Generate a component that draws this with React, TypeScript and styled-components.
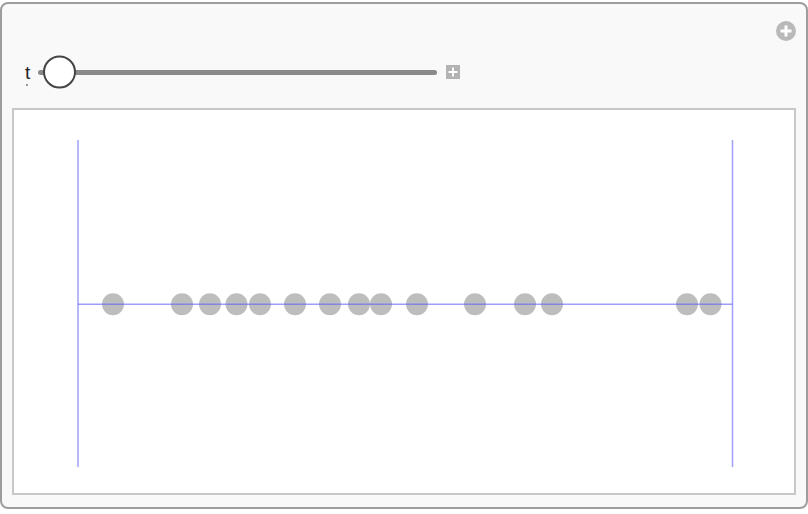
import React from "react";
import styled, { createGlobalStyle } from "styled-components";

const GlobalStyle = createGlobalStyle`
  html, body {
    margin: 0;
    padding: 0;
    background: #ffffff;
    font-family: "Liberation Sans", Arial, sans-serif;
  }
  * {
    box-sizing: border-box;
  }
`;

const dots = [113, 182, 210, 236.5, 260, 295, 330, 359, 381, 417, 475, 525, 552, 687, 710.5];

const App = () => {
  return (
    <Page>
      <GlobalStyle />
      <Panel>
        <TopBar>
          <CircleButton>
            <svg width="20" height="20" viewBox="0 0 20 20">
              <circle cx="10" cy="10" r="10" fill="#b9b9b9" />
              <rect x="8.5" y="4.5" width="3" height="11" fill="#fff" />
              <rect x="4.5" y="8.5" width="11" height="3" fill="#fff" />
            </svg>
          </CircleButton>
        </TopBar>
        <SliderRow>
          <Label>t</Label>
          <Track>
            <Thumb />
          </Track>
          <PlusBox>
            <svg width="14" height="14" viewBox="0 0 14 14">
              <rect x="6" y="2.5" width="2" height="9" fill="#fff" />
              <rect x="2.5" y="6" width="9" height="2" fill="#fff" />
            </svg>
          </PlusBox>
        </SliderRow>
        <PlotFrame>
          <svg width="100%" height="100%" viewBox="0 0 780 383">
            {dots.map((x) => (
              <circle key={x} cx={x - 14} cy={194.3} r={11} fill="#bdbdbd" />
            ))}
            <g stroke="#5f5ff8" strokeOpacity={0.6} strokeWidth={1.5}>
              <line x1={64} y1={30} x2={64} y2={357} />
              <line x1={718.5} y1={30} x2={718.5} y2={357} />
              <line x1={64} y1={194.3} x2={718.5} y2={194.3} />
            </g>
          </svg>
        </PlotFrame>
      </Panel>
    </Page>
  );
};

export default App;

const Page = styled.div`
  padding-top: 2px;
`;

const Panel = styled.div`
  width: 808px;
  height: 507px;
  border: 2px solid #9d9d9d;
  border-radius: 8px;
  background-color: #f9f9f9;
  padding: 0 10px 12px 10px;
  display: flex;
  flex-direction: column;
`;

const TopBar = styled.div`
  display: flex;
  justify-content: flex-end;
  padding-top: 17px;
  padding-right: 0;
`;

const CircleButton = styled.div`
  width: 20px;
  height: 20px;
  display: flex;
`;

const SliderRow = styled.div`
  display: flex;
  align-items: center;
  height: 32px;
  margin-top: 15px;
  margin-bottom: 20px;
  padding-left: 13px;
`;

const Label = styled.span`
  position: relative;
  font-size: 19px;
  line-height: 19px;
  color: #222;
  margin-right: 8px;

  &::after {
    content: "";
    position: absolute;
    left: 1px;
    bottom: -4px;
    width: 2px;
    height: 2px;
    border-radius: 1px;
    background: #777;
  }
`;

const Track = styled.div`
  position: relative;
  width: 399px;
  height: 5px;
  border-radius: 3px;
  background-color: #8a8a8a;
`;

const Thumb = styled.div`
  position: absolute;
  left: 5px;
  top: 50%;
  transform: translateY(-50%);
  width: 33px;
  height: 33px;
  border-radius: 50%;
  border: 2px solid #454545;
  background-color: #fff;
`;

const PlusBox = styled.div`
  width: 14px;
  height: 14px;
  margin-left: 9px;
  background-color: #b3b3b3;
  display: flex;
`;

const PlotFrame = styled.div`
  flex: 1;
  border: 2px solid #c8c8c8;
  background-color: #fff;
  display: flex;
`;
